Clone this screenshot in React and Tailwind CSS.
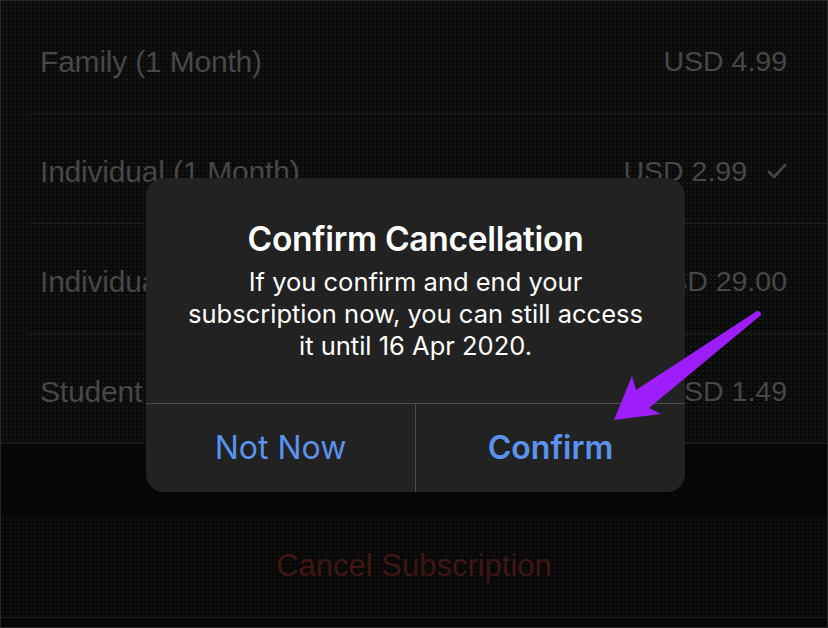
import React from "react";

const rows = [
  { name: "Family (1 Month)", price: "USD 4.99" },
  { name: "Individual (1 Month)", price: "USD 2.99", checked: true },
  { name: "Individual (1 Year)", price: "USD 29.00" },
  { name: "Student (1 Month)", price: "USD 1.49" },
];

export default function App() {
  return (
    <div className="relative w-[828px] h-[628px] overflow-hidden bg-[#060606] border border-[#262626] box-border" style={{ fontFamily: '"Liberation Sans", Arial, sans-serif' }}>
      <div className="pt-[3px] bg-[#0b0b0b] bg-[radial-gradient(#161616_1px,transparent_1px)] bg-[size:4px_4px]">
        {rows.map((r, i) => (
          <div key={i} className={`h-[110px] flex items-end ${i === rows.length - 1 ? "border-b border-[#1c1c1c]" : ""}`}>
            <div className={`flex-1 h-full flex items-center pt-[5px] pl-[12px] ml-[27px] pr-[40px] ${i < rows.length - 1 ? "border-b border-[#1c1c1c]" : ""}`}>
              <span className="text-[30px] text-[#474747] flex-1 tracking-[-0.2px]">{r.name}</span>
              <span className="text-[28.5px] text-[#474747]">{r.price}</span>
              {r.checked && (
                <svg width="20" height="16" viewBox="0 0 20 16" className="ml-[20px]">
                  <path d="M2 9 L7 14 L18 2" fill="none" stroke="#474747" strokeWidth="2.6" strokeLinecap="round" strokeLinejoin="round" />
                </svg>
              )}
            </div>
          </div>
        ))}
      </div>
      <div className="mt-[70px] h-[104px] flex items-center justify-center border-b border-[#1c1c1c] bg-[#080808] bg-[radial-gradient(#0f0f0f_1px,transparent_1px)] bg-[size:4px_4px]">
        <span className="text-[31px] text-[#3f1613] mt-[2px]">Cancel Subscription</span>
      </div>

      <div className="absolute left-[145px] top-[177px] w-[539px] h-[314px] rounded-[18px] bg-[#222222] flex flex-col" style={{ fontFamily: 'Inter, "Noto Sans", sans-serif' }}>
        <div className="flex-1 flex flex-col items-center pt-[42px] px-[20px]">
          <div className="text-[33.5px] leading-[38px] font-semibold text-white tracking-[-0.3px]">Confirm Cancellation</div>
          <div className="mt-[8px] text-[25.5px] leading-[32px] text-white text-center">
            If you confirm and end your<br />subscription now, you can still access<br />it until 16 Apr 2020.
          </div>
        </div>
        <div className="h-[89px] flex border-t border-[#4c4c4c]">
          <div className="flex-1 flex items-center justify-center border-r border-[#4c4c4c] text-[32px] text-[#5a92ee]">Not Now</div>
          <div className="flex-1 flex items-center justify-center text-[32px] font-semibold text-[#5a92ee]">Confirm</div>
        </div>
      </div>

      <svg className="absolute left-0 top-0 pointer-events-none" width="828" height="628" viewBox="0 0 828 628">
        <path d="M756 310 Q760 310 760 314 L648 407 L660 413 L613 419 L631 375 L635 389 Z" fill="#9d1dfc" />
      </svg>
    </div>
  );
}
